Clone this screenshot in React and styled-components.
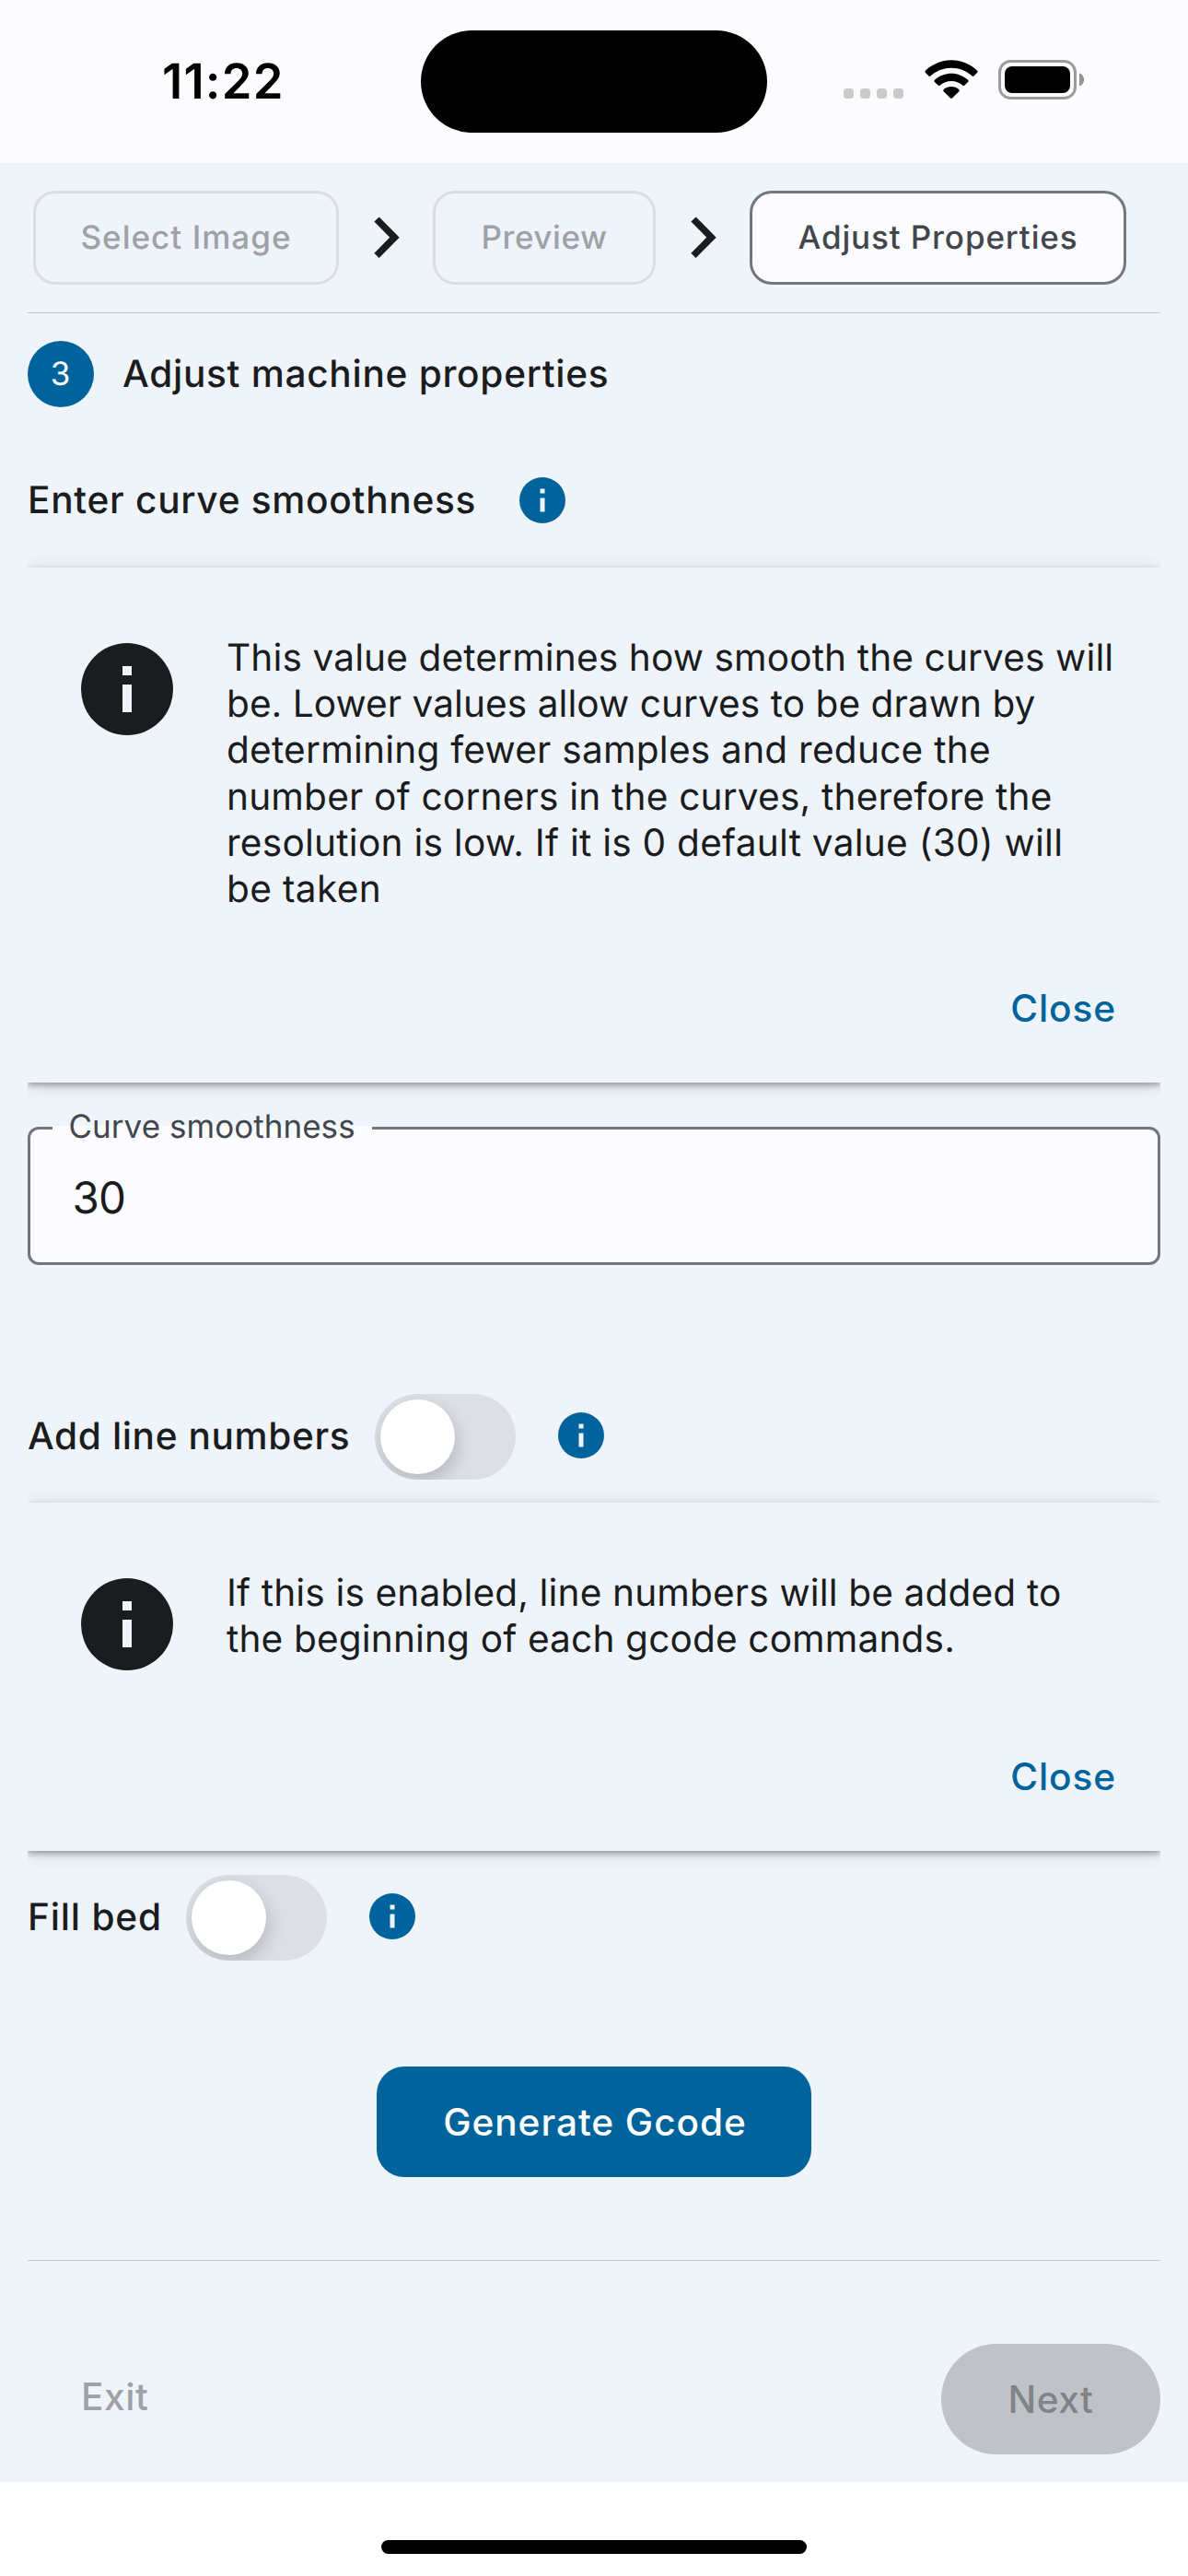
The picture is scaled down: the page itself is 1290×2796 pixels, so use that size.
import React from "react";
import styled, { createGlobalStyle } from "styled-components";

const GlobalStyle = createGlobalStyle`
  * { box-sizing: border-box; }
  html, body { margin: 0; padding: 0; }
  body {
    width: 1290px;
    font-family: Inter, "Liberation Sans", sans-serif;
    color: #1a1c1e;
    background: #ffffff;
    text-rendering: geometricPrecision;
  }
  button { font-family: inherit; margin: 0; padding: 0; border: none; background: none; }
`;

const Screen = styled.div`
  width: 1290px;
  height: 2796px;
  display: flex;
  flex-direction: column;
  background: #eff4fb;
  overflow: hidden;
`;

const StatusBar = styled.header`
  height: 177px;
  flex: none;
  display: grid;
  grid-template-columns: 457px 376px 1fr;
  align-items: center;
  background: #fcfcff;
`;

const Clock = styled.div`
  padding: 0 0 2px 176px;
  font-size: 52.5px;
  line-height: 64px;
  font-weight: 600;
  letter-spacing: 1.2px;
  color: #000;
  white-space: nowrap;
`;

const Island = styled.div`
  height: 111px;
  border-radius: 56px;
  background: #000;
`;

const StatusIcons = styled.div`
  display: flex;
  align-items: flex-end;
  height: 43px;
  padding-left: 83px;
  margin-top: -4px;
`;

const SignalDots = styled.div`
  display: flex;
  gap: 7px;
  margin: 0 23px 1px 0;
  span {
    width: 11px;
    height: 11px;
    border-radius: 3.5px;
    background: #cacacc;
  }
`;

const Steps = styled.nav`
  height: 162px;
  flex: none;
  display: flex;
  align-items: center;
  padding: 0 36px;
`;

const Step = styled.div`
  width: ${(p) => p.$width}px;
  height: 102px;
  display: flex;
  align-items: center;
  justify-content: center;
  border: 3px solid ${(p) => (p.$active ? "#72777f" : "#dadee3")};
  border-radius: 24px;
  background: ${(p) => (p.$active ? "#fcfcff" : "transparent")};
  color: ${(p) => (p.$active ? "#42474e" : "#9ea2a6")};
  font-size: 35px;
  font-weight: 500;
  letter-spacing: ${(p) => p.$spacing}px;
  white-space: nowrap;
`;

const StepArrow = styled.svg`
  width: 28px;
  height: 46px;
  margin: 0 36px 0 38px;
`;

const Divider = styled.hr`
  width: 1230px;
  height: 1px;
  flex: none;
  margin: ${(p) => p.$top || 0}px 30px 0;
  border: none;
  background: #c2c7cf;
`;

const Heading = styled.div`
  height: 72px;
  flex: none;
  display: flex;
  align-items: center;
  gap: 31px;
  margin: 30px 30px 0;
`;

const StepNumber = styled.div`
  width: 72px;
  height: 72px;
  display: flex;
  align-items: center;
  justify-content: center;
  padding: 0 1px 1px 0;
  border-radius: 50%;
  background: #00639b;
  color: #fff;
  font-size: 35px;
`;

const Label = styled.span`
  font-size: 40.6px;
  line-height: 60px;
  font-weight: 500;
  letter-spacing: ${(p) => p.$spacing}px;
  white-space: nowrap;
`;

const SettingRow = styled.div`
  height: ${(p) => p.$height}px;
  flex: none;
  display: flex;
  align-items: center;
  margin: ${(p) => p.$top}px 30px ${(p) => p.$bottom || 0}px;
`;

const RowLabel = styled(Label)`
  width: ${(p) => p.$width}px;
  padding-bottom: 2px;
`;

const InfoSvg = styled.svg`
  width: ${(p) => p.$size}px;
  height: ${(p) => p.$size}px;
  flex: none;
  margin-left: ${(p) => p.$left || 0}px;
  margin-bottom: ${(p) => p.$lift || 0}px;
  fill: ${(p) => p.$color};
`;

const Track = styled.div`
  width: 153px;
  height: 93px;
  flex: none;
  padding: 6px;
  border-radius: 47px;
  background: #dcdfe6;
  overflow: hidden;
`;

const Thumb = styled.div`
  width: 81px;
  height: 81px;
  border-radius: 50%;
  background: #fff;
  box-shadow: 2px 8px 20px rgba(0, 0, 0, 0.18);
`;

const Banner = styled.section`
  width: 1230px;
  flex: none;
  margin: 0 30px;
  padding-top: 72px;
  background: #eff4fb;
  box-shadow: 0 3px 18px rgba(0, 0, 0, 0.15), 0 3px 6px rgba(0, 0, 0, 0.3);
  clip-path: inset(-40px 0);
`;

const BannerBody = styled.div`
  min-height: 120px;
  display: flex;
  align-items: flex-start;
  padding-left: 48px;
`;

const BannerText = styled.p`
  margin: 1px 0 -1px 48px;
  font-size: 40.6px;
  line-height: 50.2px;
  font-weight: 400;
`;

const TextLine = styled.span`
  display: block;
  letter-spacing: ${(p) => p.$spacing}px;
  white-space: nowrap;
`;

const BannerActions = styled.div`
  height: 186px;
  display: flex;
  justify-content: flex-end;
  align-items: center;
  padding: 25px 48px 0 0;
`;

const TextButton = styled.button`
  color: ${(p) => p.$color};
  font-size: 40.6px;
  font-weight: 500;
  line-height: 60px;
  letter-spacing: ${(p) => p.$spacing}px;
`;

const Field = styled.fieldset`
  width: 1230px;
  height: 163px;
  flex: none;
  margin: 35px 30px 0;
  padding: 0;
  border: none;
  display: grid;
`;

const FieldBox = styled.div`
  grid-area: 1 / 1;
  height: 150px;
  margin-top: 13px;
  display: flex;
  align-items: center;
  padding: 5px 0 0 45.5px;
  border: 3px solid #72777f;
  border-radius: 12px;
  background: #fcfcff;
  font-size: 47.5px;
  letter-spacing: -0.8px;
`;

const FieldLabel = styled.label`
  grid-area: 1 / 1;
  z-index: 1;
  width: 347px;
  height: 32px;
  margin-left: 27px;
  padding-left: 17.5px;
  font-size: 35px;
  line-height: 27px;
  letter-spacing: 0.04px;
  color: #42474e;
  white-space: nowrap;
  background: linear-gradient(transparent 12px, #fcfcff 12px);
`;

const PrimaryButton = styled.button`
  width: 472px;
  height: 120px;
  flex: none;
  align-self: center;
  margin-top: 115px;
  padding-left: 2px;
  border-radius: 30px;
  background: #00639b;
  color: #fff;
  font-size: 40.6px;
  font-weight: 500;
  letter-spacing: 0.96px;
`;

const Footer = styled.footer`
  height: 240px;
  flex: none;
  display: flex;
  justify-content: space-between;
  align-items: center;
  padding: 60px 30px 0 88px;
`;

const NextButton = styled.button`
  width: 238px;
  height: 120px;
  border-radius: 60px;
  background: #bfc3c7;
  color: #808387;
  font-size: 40.6px;
  font-weight: 500;
  letter-spacing: 0.54px;
`;

const ExitButton = styled(TextButton)`
  margin-bottom: 5px;
`;

const HomeArea = styled.div`
  height: 102px;
  flex: none;
  display: flex;
  justify-content: center;
  padding-top: 63px;
  background: #fff;
`;

const HomeIndicator = styled.div`
  width: 462px;
  height: 15px;
  border-radius: 8px;
  background: #000;
`;

const InfoIcon = ({ size, color, left, lift }) => (
  <InfoSvg viewBox="0 0 24 24" $size={size} $color={color} $left={left} $lift={lift}>
    <path d="M13 9h-2V7h2m0 10h-2v-6h2m-1-9A10 10 0 0 0 2 12a10 10 0 0 0 10 10 10 10 0 0 0 10-10A10 10 0 0 0 12 2z" />
  </InfoSvg>
);

const Arrow = () => (
  <StepArrow viewBox="0 0 28 46">
    <path d="M3 3L22.5 22.7L3 42.4" fill="none" stroke="#1a1c1e" strokeWidth="7.4" />
  </StepArrow>
);

const WifiIcon = () => (
  <svg width="58" height="43" viewBox="0 0 58 43">
    <path d="M29 0.3C39.8 0.3 49.6 4.6 57 11.6Q58 12.8 57 13.9L53.2 17.7Q52.4 18.3 51.600 17.6C45.4 11.9 37.6 8.8 29 8.8S12.6 11.900 6.400 17.6Q5.600 18.3 4.800 17.7L1 13.9Q0 12.8 1 11.6C8.4 4.6 18.2 0.3 29 0.3Z" />
    <path d="M29 14.7C35.9 14.7 42.3 17.4 47.1 21.8Q48.1 22.9 47.1 24L43.2 27.800Q42.4 28.500 41.500 27.800C38 24.700 33.7 23 29 23S20 24.7 16.500 27.8Q15.600 28.5 14.800 27.8L10.9 24Q9.9 22.9 10.9 21.8C15.7 17.4 22.1 14.7 29 14.7Z" />
    <path d="M29 29C32.1 29 35 30.1 37.2 31.9Q38.4 33 37.3 34.2L30 41.6Q29 42.5 28 41.6L20.7 34.2Q19.6 33 20.8 31.9C23 30.1 25.9 29 29 29Z" />
  </svg>
);

const BatterySvg = styled.svg`
  width: 95px;
  height: 43px;
  margin-left: 22px;
`;

const BatteryIcon = () => (
  <BatterySvg viewBox="0 0 95 43">
    <rect x="1.5" y="1.5" width="82" height="40" rx="12" fill="none" stroke="#9c9c9e" strokeWidth="3" />
    <rect x="7" y="7" width="71" height="29" rx="8" />
    <path d="M88 14.5C91.2 15.6 93.2 18.3 93.2 21.5S91.2 27.4 88 28.5Z" fill="#939395" />
  </BatterySvg>
);

const Switch = () => (
  <Track>
    <Thumb />
  </Track>
);

const InfoBanner = ({ lines }) => (
  <Banner>
    <BannerBody>
      <InfoIcon size={120} color="#1a1c1e" />
      <BannerText>
        {lines.map(([text, spacing]) => (
          <TextLine key={text} $spacing={spacing}>{text}</TextLine>
        ))}
      </BannerText>
    </BannerBody>
    <BannerActions>
      <TextButton $color="#00639b" $spacing={0.9}>Close</TextButton>
    </BannerActions>
  </Banner>
);

const SMOOTHNESS_HELP = [
  ["This value determines how smooth the curves will", 0.13],
  ["be. Lower values allow curves to be drawn by", 0.06],
  ["determining fewer samples and reduce the", 0.24],
  ["number of corners in the curves, therefore the", 0.2],
  ["resolution is low. If it is 0 default value (30) will", 0.25],
  ["be taken", 0.35],
];

const LINE_NUMBER_HELP = [
  ["If this is enabled, line numbers will be added to", 0.15],
  ["the beginning of each gcode commands.", 0.15],
];

export default function App() {
  return (
    <Screen>
      <GlobalStyle />
      <StatusBar>
        <Clock>11:22</Clock>
        <Island />
        <StatusIcons>
          <SignalDots><span /><span /><span /><span /></SignalDots>
          <WifiIcon />
          <BatteryIcon />
        </StatusIcons>
      </StatusBar>
      <Steps>
        <Step $width={332} $spacing={1.03}>Select Image</Step>
        <Arrow />
        <Step $width={242} $spacing={0.56}>Preview</Step>
        <Arrow />
        <Step $width={409} $spacing={0.88} $active>Adjust Properties</Step>
      </Steps>
      <Divider />
      <Heading>
        <StepNumber>3</StepNumber>
        <Label $spacing={0.72}>Adjust machine properties</Label>
      </Heading>
      <SettingRow $height={145} $top={29}>
        <RowLabel $width={485} $spacing={0.73}>Enter curve smoothness</RowLabel>
        <InfoIcon size={60} color="#00639b" left={44} lift={1} />
      </SettingRow>
      <InfoBanner lines={SMOOTHNESS_HELP} />
      <Field>
        <FieldLabel>Curve smoothness</FieldLabel>
        <FieldBox>30</FieldBox>
      </Field>
      <SettingRow $height={93} $top={140} $bottom={25}>
        <RowLabel $width={377} $spacing={0.62}>Add line numbers</RowLabel>
        <Switch />
        <InfoIcon size={60} color="#00639b" left={41} lift={3} />
      </SettingRow>
      <InfoBanner lines={LINE_NUMBER_HELP} />
      <SettingRow $height={93} $top={26}>
        <RowLabel $width={172} $spacing={0.8}>Fill bed</RowLabel>
        <Switch />
        <InfoIcon size={60} color="#00639b" left={41} lift={3} />
      </SettingRow>
      <PrimaryButton>Generate Gcode</PrimaryButton>
      <Divider $top={90} />
      <Footer>
        <ExitButton $color="#9ea2a6" $spacing={0.53}>Exit</ExitButton>
        <NextButton>Next</NextButton>
      </Footer>
      <HomeArea>
        <HomeIndicator />
      </HomeArea>
    </Screen>
  );
}
